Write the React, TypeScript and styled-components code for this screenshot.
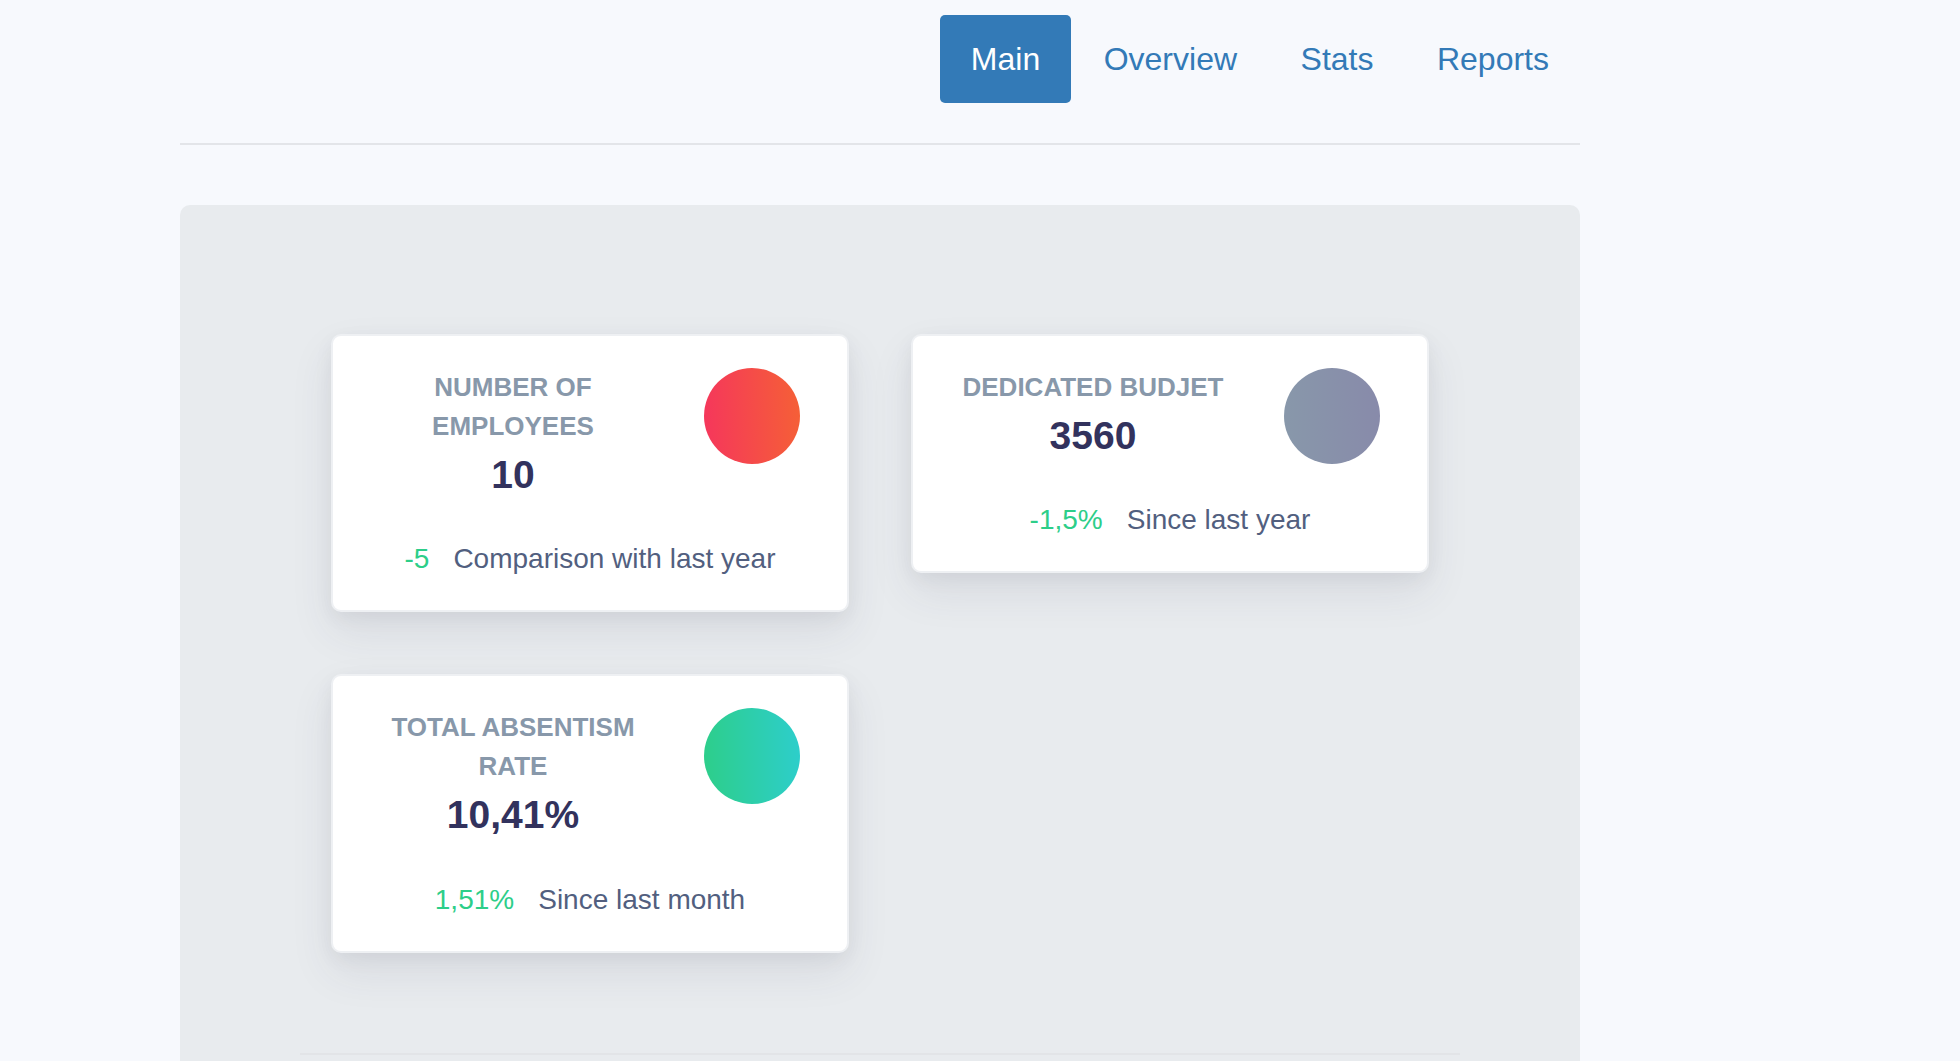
import React from 'react';
import styled, { createGlobalStyle } from 'styled-components';

const GlobalStyle = createGlobalStyle`
  html, body { margin: 0; padding: 0; background: #f7f9fd; }
  body { font-family: "Liberation Sans", Arial, sans-serif; }
  * { box-sizing: border-box; }
`;

const Page = styled.div`
  width: 1400px;
  margin-left: 180px;
  padding-top: 15px;
`;

const Header = styled.header`
  display: flex;
  justify-content: flex-end;
  padding-bottom: 40px;
  border-bottom: 2px solid #e3e5e9;
`;

const NavList = styled.nav`
  display: flex;
  gap: 1.5px;
`;

const NavLink = styled.a<{ $active?: boolean }>`
  display: block;
  font-size: 32px;
  line-height: 36.8px;
  padding: 25.6px 31px;
  border-radius: 5px;
  text-decoration: none;
  color: ${(p) => (p.$active ? '#ffffff' : '#337ab7')};
  background: ${(p) => (p.$active ? '#337ab7' : 'transparent')};
`;

const Panel = styled.main`
  margin-top: 60px;
  background: #e8ebee;
  border-radius: 10px;
  padding: 129px 120px 200px;
`;

const Grid = styled.div`
  display: grid;
  grid-template-columns: 518px 518px;
  gap: 62px;
  margin: 0 31px;
  align-items: start;
`;

const Card = styled.section`
  background: #ffffff;
  border: 2px solid #eef0f3;
  border-radius: 10px;
  padding: 32px 47px 30px;
  box-shadow: 0 19px 44px rgba(50, 50, 93, 0.09), 0 6px 19px rgba(0, 0, 0, 0.05);
`;

const CardTop = styled.div`
  display: flex;
  justify-content: space-between;
  align-items: flex-start;
`;

const TitleCol = styled.div`
  width: 266px;
  text-align: center;
`;

const Title = styled.h5`
  margin: 0;
  font-size: 26px;
  line-height: 39px;
  font-weight: 700;
  color: #8898aa;
  text-transform: uppercase;
`;

const Value = styled.div`
  font-size: 39px;
  line-height: 58.5px;
  font-weight: 700;
  color: #32325d;
`;

const Icon = styled.div<{ $from: string; $to: string }>`
  width: 96px;
  height: 96px;
  flex-shrink: 0;
  border-radius: 50%;
  background: linear-gradient(87deg, ${(p) => p.$from} 0%, ${(p) => p.$to} 100%);
`;

const Footer = styled.p`
  margin: 34px 0 0;
  text-align: center;
  font-size: 28px;
  line-height: 42px;
  color: #525f7f;
`;

const Delta = styled.span`
  color: #2dce89;
  margin-right: 24px;
`;

const Rule = styled.hr`
  margin: 100px 0 0;
  border: 0;
  border-top: 2px solid #e2e4e7;
`;

type Stat = {
  title: string;
  value: string;
  delta: string;
  caption: string;
  from: string;
  to: string;
};

const stats: Stat[] = [
  { title: 'Number of employees', value: '10', delta: '-5', caption: 'Comparison with last year', from: '#f5365c', to: '#f56036' },
  { title: 'Dedicated budjet', value: '3560', delta: '-1,5%', caption: 'Since last year', from: '#8898aa', to: '#888aaa' },
  { title: 'Total absentism rate', value: '10,41%', delta: '1,51%', caption: 'Since last month', from: '#2dce89', to: '#2dcecc' },
];

const StatCard: React.FC<{ stat: Stat }> = ({ stat }) => (
  <Card>
    <CardTop>
      <TitleCol>
        <Title>{stat.title}</Title>
        <Value>{stat.value}</Value>
      </TitleCol>
      <Icon $from={stat.from} $to={stat.to} />
    </CardTop>
    <Footer>
      <Delta>{stat.delta}</Delta>
      <span>{stat.caption}</span>
    </Footer>
  </Card>
);

export default function App() {
  return (
    <>
      <GlobalStyle />
      <Page>
        <Header>
          <NavList>
            <NavLink href="#" $active>Main</NavLink>
            <NavLink href="#">Overview</NavLink>
            <NavLink href="#">Stats</NavLink>
            <NavLink href="#">Reports</NavLink>
          </NavList>
        </Header>
        <Panel>
          <Grid>
            {stats.map((s) => (
              <StatCard key={s.title} stat={s} />
            ))}
          </Grid>
          <Rule />
        </Panel>
      </Page>
    </>
  );
}
